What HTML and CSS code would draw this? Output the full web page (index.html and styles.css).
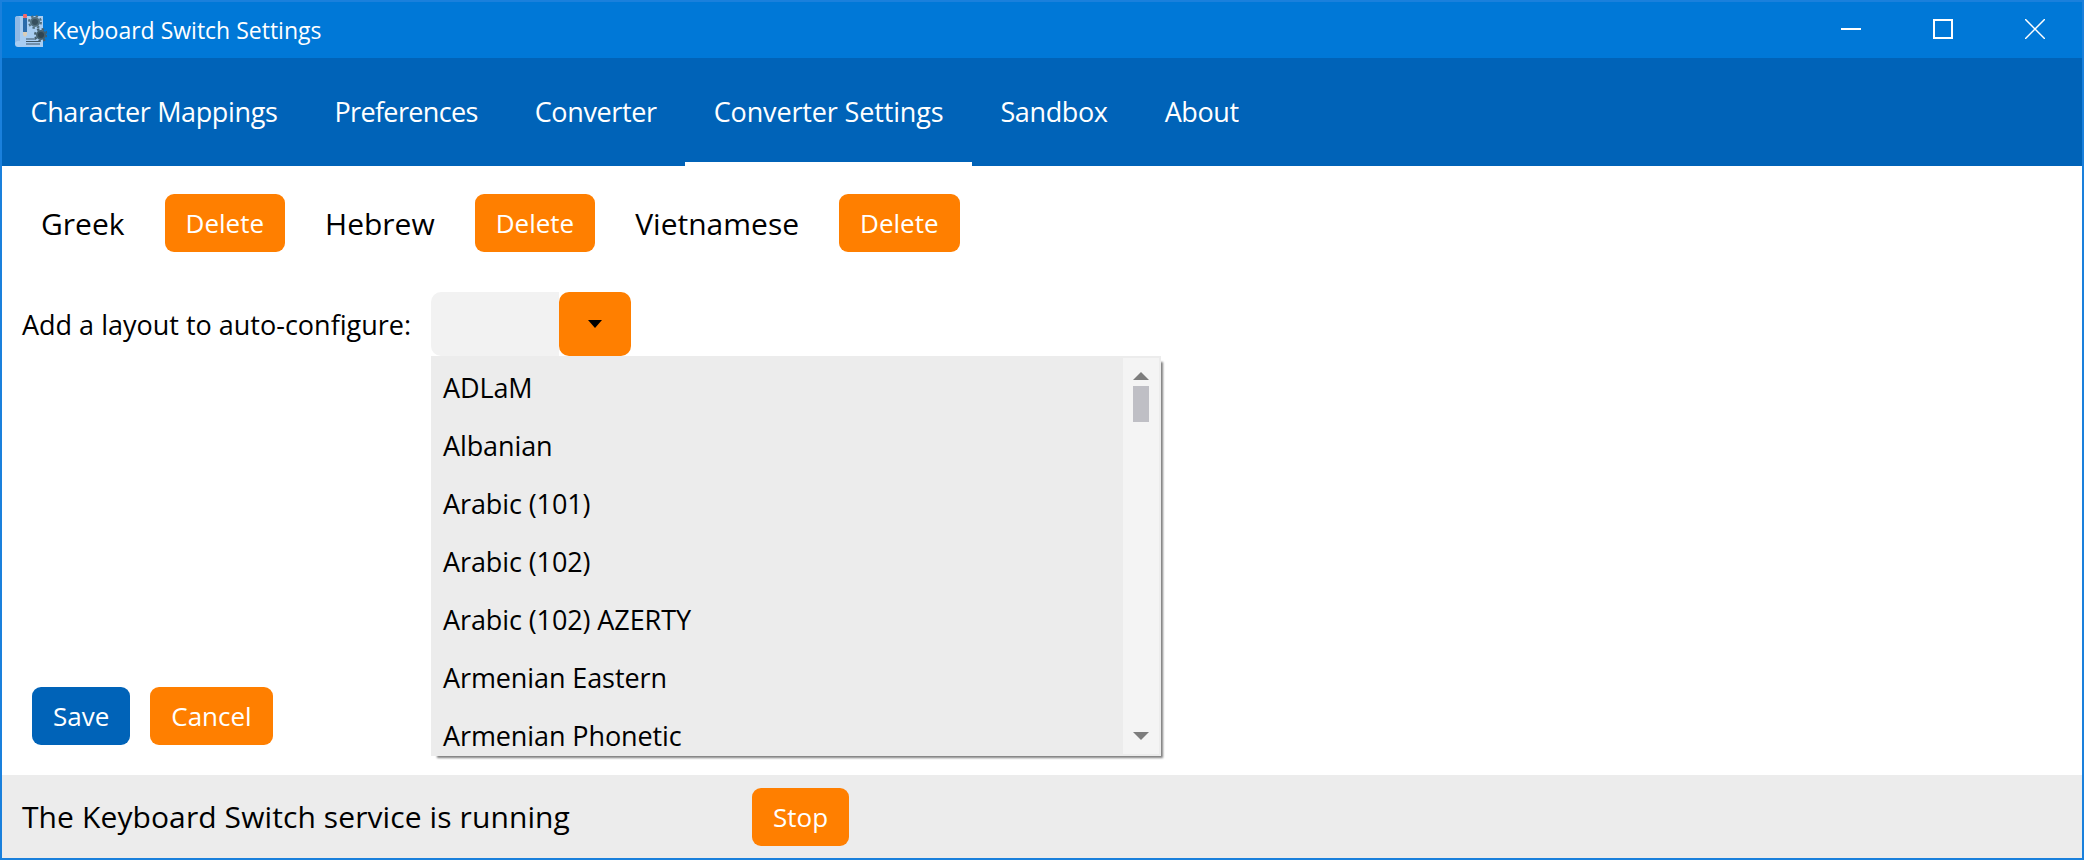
FILE: index.html
```html
<!DOCTYPE html>
<html lang="en">
<head>
	<meta charset="UTF-8">
	<title>Keyboard Switch Settings</title>
	<link rel="stylesheet" href="styles.css">
</head>
<body>
	<div class="window">
		<header class="titlebar">
			<svg class="app-icon" width="32" height="33" viewBox="0 0 32 33">
				<path d="M3 2h25v31H3q-3 0-3-3V5q0-3 3-3z" fill="#a8cdf2"/>
				<path d="M0 5q0-3 2.500-3T5 5v22q-3-1-5 2z" fill="#8fb9e6"/>
				<rect x="8" y="0" width="4" height="4" rx="1" fill="#f2686c"/>
				<rect x="8" y="4" width="4" height="14" fill="#2c6cab"/>
				<path d="M8 18h4v3l-2 2-2-2z" fill="#d9cdb8"/>
				<path d="M11 25h10M11 27.500h14M11 30h14" stroke="#3c5566" stroke-width="1.200"/>
				<circle cx="20" cy="8" r="4" fill="#37505f" stroke="#52707f" stroke-width="2"/>
				<circle cx="20" cy="8" r="6" fill="none" stroke="#52707f" stroke-width="2" stroke-dasharray="2.400 2.300"/>
				<circle cx="26" cy="21" r="4" fill="#2f4552" stroke="#455f6d" stroke-width="2"/>
				<circle cx="26" cy="21" r="6" fill="none" stroke="#455f6d" stroke-width="2" stroke-dasharray="2.400 2.300"/>
			</svg>
			<span class="app-title">Keyboard Switch Settings</span>
			<div class="win-controls">
				<svg width="20" height="20" viewBox="0 0 20 20"><path d="M0 10h20" stroke="#fff" stroke-width="2"/></svg>
				<svg width="20" height="20" viewBox="0 0 20 20"><rect x="1" y="1" width="18" height="18" fill="none" stroke="#fff" stroke-width="2"/></svg>
				<svg width="20" height="20" viewBox="0 0 20 20"><path d="M0 0l20 20M20 0L0 20" stroke="#fff" stroke-width="1.500"/></svg>
			</div>
		</header>

		<nav class="tabs">
			<a class="tab">Character Mappings</a>
			<a class="tab tab-tight">Preferences</a>
			<a class="tab">Converter</a>
			<a class="tab tab-active">Converter Settings</a>
			<a class="tab">Sandbox</a>
			<a class="tab">About</a>
		</nav>

		<main class="content">
			<div class="layouts">
				<span class="layout-name">Greek</span>
				<button class="btn btn-orange">Delete</button>
				<span class="layout-name">Hebrew</span>
				<button class="btn btn-orange">Delete</button>
				<span class="layout-name">Vietnamese</span>
				<button class="btn btn-orange">Delete</button>
			</div>

			<div class="add-row">
				<label class="add-label">Add a layout to auto-configure:</label>
				<div class="combo">
					<div class="combo-field"></div>
					<div class="combo-arrow"><span class="caret"></span></div>
					<div class="dropdown">
						<ul class="options">
							<li>ADLaM</li>
							<li>Albanian</li>
							<li>Arabic (101)</li>
							<li>Arabic (102)</li>
							<li>Arabic (102) AZERTY</li>
							<li>Armenian Eastern</li>
							<li>Armenian Phonetic</li>
						</ul>
						<div class="scrollbar">
							<span class="sb-up"></span>
							<span class="sb-thumb"></span>
							<span class="sb-down"></span>
						</div>
					</div>
				</div>
			</div>

			<div class="actions">
				<button class="btn btn-blue">Save</button>
				<button class="btn btn-orange">Cancel</button>
			</div>
		</main>

		<footer class="statusbar">
			<span class="status-text">The Keyboard Switch service is running</span>
			<button class="btn btn-orange">Stop</button>
		</footer>
	</div>
</body>
</html>
```

FILE: styles.css
```css
html, body {
	margin: 0;
	padding: 0;
	height: 100%;
	background: #fff;
}
body {
	font-family: "Open Sans", "Noto Sans", sans-serif;
	color: #000;
}
.window {
	box-sizing: border-box;
	width: 2084px;
	height: 860px;
	border: 2px solid #1a80dc;
	display: flex;
	flex-direction: column;
	overflow: hidden;
}

/* title bar */
.titlebar {
	height: 56px;
	flex: none;
	background: #0078d7;
	color: #fff;
	display: flex;
	align-items: center;
	padding-left: 13px;
}
.app-icon {
	flex: none;
}
.app-title {
	font-size: 23px;
	margin-left: 5px;
}
.win-controls {
	margin-left: auto;
	margin-bottom: 2px;
	display: flex;
	gap: 72px;
	padding-right: 37px;
}

/* tabs */
.tabs {
	height: 108px;
	flex: none;
	background: #0063b8;
	display: flex;
}
.tab {
	box-sizing: border-box;
	padding: 0 28.500px;
	line-height: 108px;
	font-size: 27px;
	letter-spacing: -0.370px;
	color: #fff;
}
.tab-tight {
	letter-spacing: -0.650px;
}
.tab-active {
	letter-spacing: -0.150px;
	border-bottom: 4px solid #fff;
}

/* buttons */
.btn {
	font: inherit;
	font-size: 26px;
	height: 58px;
	padding: 0 21px;
	border: 0;
	border-radius: 9px;
	color: #fff;
}
.btn-orange {
	background: #ff7f00;
}
.btn-blue {
	background: #0063b8;
}

/* content */
.content {
	flex: 1;
	min-height: 0;
	display: flex;
	flex-direction: column;
}
.layouts {
	display: flex;
	align-items: center;
	padding: 28px 0 0 39px;
}
.layout-name {
	font-size: 30px;
	margin-right: 40px;
}
.layouts .btn {
	margin-right: 40px;
}
.add-row {
	display: flex;
	align-items: center;
	margin-top: 40px;
	padding-left: 20px;
}
.add-label {
	font-size: 27px;
	width: 409px;
	white-space: nowrap;
}
.combo {
	position: relative;
	width: 200px;
	height: 64px;
	display: flex;
}
.combo-field {
	flex: 1;
	background: #f2f2f2;
	border-radius: 10px 0 0 10px;
}
.combo-arrow {
	width: 72px;
	background: #ff7f00;
	border-radius: 10px;
	display: flex;
	align-items: center;
	justify-content: center;
}
.caret {
	border-left: 7px solid transparent;
	border-right: 7px solid transparent;
	border-top: 8px solid #000;
}
.dropdown {
	position: absolute;
	top: 64px;
	left: 0;
	width: 730px;
	height: 400px;
	background: #ececec;
	box-shadow: 4px 4px 2px -2px #808080;
	display: flex;
	overflow: hidden;
}
.options {
	flex: 1;
	list-style: none;
	margin: 0;
	padding: 3px 12px 0;
	font-size: 27px;
	letter-spacing: -0.100px;
}
.options li {
	height: 58px;
	line-height: 58px;
}
.scrollbar {
	width: 38px;
	box-sizing: border-box;
	background: #f4f4f4;
	border: solid #ececec;
	border-width: 2px 2px 2px 0;
	display: flex;
	flex-direction: column;
	align-items: center;
	padding: 14px 0 14px 0;
}
.sb-up {
	border-left: 8px solid transparent;
	border-right: 8px solid transparent;
	border-bottom: 8px solid #7d7d7d;
}
.sb-thumb {
	width: 16px;
	height: 36px;
	margin-top: 6px;
	background: #bfbfc5;
}
.sb-down {
	margin-top: auto;
	border-left: 8px solid transparent;
	border-right: 8px solid transparent;
	border-top: 8px solid #7d7d7d;
}
.actions {
	margin-top: auto;
	display: flex;
	gap: 20px;
	padding: 0 0 30px 30px;
}

/* status bar */
.statusbar {
	height: 83px;
	flex: none;
	background: #ececec;
	display: flex;
	align-items: center;
	padding-left: 20px;
}
.status-text {
	font-size: 30px;
	letter-spacing: 0.100px;
	width: 730px;
}
```
